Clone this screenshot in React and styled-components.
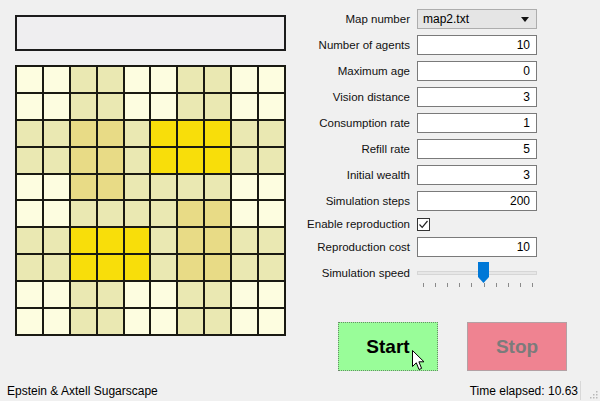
import { Fragment } from 'react';
import styled, { createGlobalStyle } from 'styled-components';

const GlobalStyle = createGlobalStyle`
  html, body {
    margin: 0;
    padding: 0;
    background: #f0f0f0;
  }
  body {
    font-family: "Liberation Sans", Arial, sans-serif;
    font-size: 12px;
    color: #000;
  }
`;

const Window = styled.div`
  width: 600px;
  height: 401px;
  display: flex;
  flex-direction: column;
  background: #f0f0f0;
  overflow: hidden;
  position: relative;
`;

const Main = styled.div`
  flex: 1;
  display: flex;
`;

const LeftPanel = styled.section`
  width: 300px;
  box-sizing: border-box;
  padding: 15px 0 0 15px;
  display: flex;
  flex-direction: column;
  gap: 14px;
`;

const InfoBox = styled.div`
  width: 271px;
  height: 36px;
  box-sizing: border-box;
  border: 2px solid #1c1c1c;
  background: #efeef0;
`;

const Board = styled.div`
  width: 271px;
  height: 271px;
  box-sizing: border-box;
  padding: 2px;
  display: grid;
  grid-template-columns: repeat(10, 1fr);
  grid-template-rows: repeat(10, 1fr);
  gap: 2px;
  background: #1a1a12;
`;

const cellColors = {
  p: '#fdfde0',
  m: '#eae8b2',
  d: '#e8db86',
  y: '#f8de0a',
};

const Cell = styled.div`
  background: ${(props) => cellColors[props.level]};
`;

const RightPanel = styled.section`
  flex: 1;
  display: flex;
  flex-direction: column;
  padding-top: 6px;
`;

const Form = styled.div`
  display: grid;
  grid-template-columns: 110px 120px;
  column-gap: 7px;
  font-size: 11.5px;
`;

const Label = styled.div`
  height: ${(props) => props.h}px;
  display: flex;
  align-items: ${(props) => (props.top ? 'flex-start' : 'center')};
  padding-top: ${(props) => (props.top ? '7px' : '0')};
  box-sizing: border-box;
  justify-content: flex-end;
  white-space: nowrap;
  color: #111;
`;

const Field = styled.div`
  height: ${(props) => props.h}px;
  display: flex;
  align-items: center;
  position: relative;
`;

const Input = styled.div`
  width: 120px;
  height: 20px;
  box-sizing: border-box;
  border: 1px solid #7a7a7a;
  background: #fff;
  text-align: right;
  padding: 0 6px;
  line-height: 18px;
  font-size: 12px;
`;

const Combo = styled.div`
  width: 120px;
  height: 20px;
  box-sizing: border-box;
  border: 1px solid #adadad;
  background: #e5e5e5;
  padding: 0 5px;
  line-height: 18px;
  font-size: 12px;
  display: flex;
  justify-content: space-between;
  align-items: center;
`;

const Arrow = styled.span`
  width: 0;
  height: 0;
  border-left: 4px solid transparent;
  border-right: 4px solid transparent;
  border-top: 5px solid #111;
  margin-right: 2px;
`;

const Check = styled.div`
  width: 13px;
  height: 13px;
  box-sizing: border-box;
  border: 1px solid #333;
  background: #fff;
  display: flex;
  align-items: center;
  justify-content: center;
`;

const Slider = styled.div`
  width: 120px;
  height: 30px;
  position: relative;
  align-self: flex-start;
`;

const Groove = styled.div`
  position: absolute;
  left: 0;
  right: 0;
  top: 11px;
  height: 4px;
  box-sizing: border-box;
  border: 1px solid #d6d6d6;
  background: #e7e7e7;
`;

const Handle = styled.svg`
  position: absolute;
  top: 2px;
`;

const Ticks = styled.div`
  position: absolute;
  left: 6px;
  right: 4px;
  top: 23px;
  display: flex;
  justify-content: space-between;
`;

const Tick = styled.span`
  width: 1px;
  height: 4px;
  background: #8a8a8a;
`;

const ButtonRow = styled.div`
  display: flex;
  gap: 29px;
  margin-top: 32px;
  margin-left: 38px;
  position: relative;
`;

const ActionButton = styled.div`
  width: 100px;
  height: 49px;
  box-sizing: border-box;
  display: flex;
  align-items: center;
  justify-content: center;
  font-size: 19px;
  font-weight: bold;
  background: ${(props) => (props.stop ? '#ef8391' : '#99fd99')};
  color: ${(props) => (props.stop ? '#7b7b7b' : '#000')};
  border: 1px ${(props) => (props.stop ? 'solid #b4a0a4' : 'dotted #6a8a6a')};
`;

const Cursor = styled.svg`
  position: absolute;
  left: 74px;
  top: 28px;
`;

const StatusBar = styled.footer`
  height: 21px;
  display: flex;
  align-items: center;
  justify-content: space-between;
  padding-left: 7px;
`;

const StatusRight = styled.div`
  display: flex;
  align-items: center;
  height: 100%;
`;

const Divider = styled.span`
  width: 1px;
  height: 19px;
  background: #d8d8d8;
  margin-left: 2px;
`;

const Grip = styled.svg`
  margin: 8px 2px 0 8px;
`;

const board = [
  'ppmmppmmpp',
  'ppmmppmmpp',
  'mmddmyyymm',
  'mmddmyyymm',
  'ppddmmmmpp',
  'ppmmmmddpp',
  'mmyyymddmm',
  'mmyyymddmm',
  'ppmmppmmpp',
  'ppmmppmmpp',
];

const fields = [
  ['Number of agents', '10'],
  ['Maximum age', '0'],
  ['Vision distance', '3'],
  ['Consumption rate', '1'],
  ['Refill rate', '5'],
  ['Initial wealth', '3'],
  ['Simulation steps', '200'],
];

export default function App() {
  return (
    <Window>
      <GlobalStyle />
      <Main>
        <LeftPanel>
          <InfoBox />
          <Board>
            {board.map((row, r) =>
              row.split('').map((level, c) => <Cell key={`${r}-${c}`} level={level} />)
            )}
          </Board>
        </LeftPanel>
        <RightPanel>
          <Form>
            <Label h={26}>Map number</Label>
            <Field h={26}>
              <Combo>
                <span>map2.txt</span>
                <Arrow />
              </Combo>
            </Field>
            {fields.map(([label, value]) => (
              <Fragment key={label}>
                <Label h={26}>{label}</Label>
                <Field h={26}>
                  <Input>{value}</Input>
                </Field>
              </Fragment>
            ))}
            <Label h={20}>Enable reproduction</Label>
            <Field h={20}>
              <Check>
                <svg width="11" height="11" viewBox="0 0 11 11">
                  <path d="M1.5 5.5 L4.2 8.3 L9.5 2" fill="none" stroke="#222" strokeWidth="1.2" />
                </svg>
              </Check>
            </Field>
            <Label h={26}>Reproduction cost</Label>
            <Field h={26}>
              <Input>10</Input>
            </Field>
            <Label h={30} top>Simulation speed</Label>
            <Field h={30}>
              <Slider>
                <Groove />
                <Handle width="11" height="21" viewBox="0 0 11 21" style={{ left: 61 }}>
                  <path d="M0 0 H11 V15 L5.5 21 L0 15 Z" fill="#0078d7" />
                </Handle>
                <Ticks>
                  {Array.from({ length: 10 }).map((_, i) => (
                    <Tick key={i} />
                  ))}
                </Ticks>
              </Slider>
            </Field>
          </Form>
          <ButtonRow>
            <ActionButton>Start</ActionButton>
            <ActionButton stop>Stop</ActionButton>
            <Cursor width="13" height="21" viewBox="0 0 13 21">
              <path
                d="M0.5 0.5 L0.5 16.5 L4.3 12.8 L7 19.5 L9.6 18.4 L6.9 11.8 L12 11.8 Z"
                fill="#fff"
                stroke="#000"
                strokeWidth="1"
              />
            </Cursor>
          </ButtonRow>
        </RightPanel>
      </Main>
      <StatusBar>
        <span>Epstein &amp; Axtell Sugarscape</span>
        <StatusRight>
          <span>Time elapsed: 10.63</span>
          <Divider />
          <Grip width="9" height="9" viewBox="0 0 9 9">
            {[[7, 1], [4, 4], [7, 4], [1, 7], [4, 7], [7, 7]].map(([x, y]) => (
              <rect key={`${x}${y}`} x={x} y={y} width="1.5" height="1.5" fill="#b8b8b8" />
            ))}
          </Grip>
        </StatusRight>
      </StatusBar>
    </Window>
  );
}
